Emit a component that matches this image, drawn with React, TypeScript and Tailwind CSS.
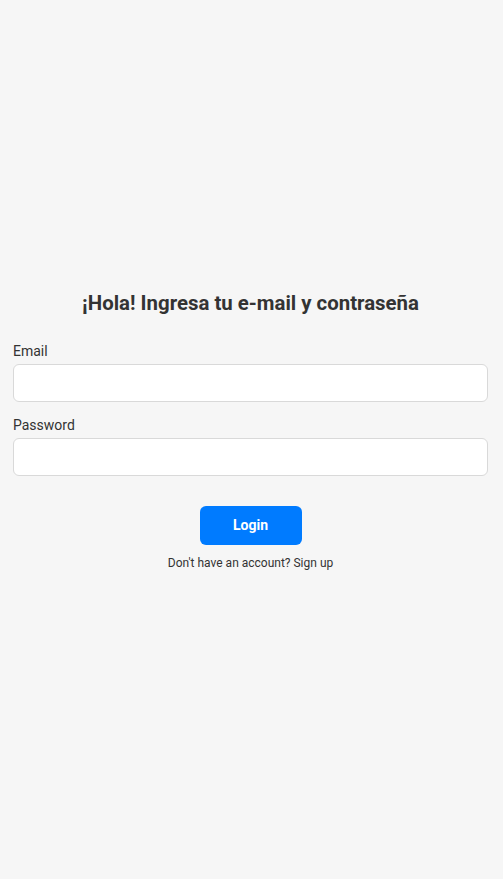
export default function App() {
  return (
    <div className="min-h-screen w-full bg-[#f6f6f6] flex flex-col justify-center pl-[13px] pr-[15px] pb-[20px] font-['Roboto',sans-serif] text-[#333]">
      <h1 className="text-center text-[20.4px] font-bold leading-[28px] mb-[24px]">
        ¡Hola! Ingresa tu e-mail y contraseña
      </h1>
      <label className="block text-[14px] leading-[20px] text-[#333] mb-[3px]">Email</label>
      <input
        type="email"
        className="block w-full h-[38px] rounded-[6px] border border-[#d9d9d9] bg-white px-3 outline-none mb-[13px]"
      />
      <label className="block text-[14px] leading-[20px] text-[#333] mb-[3px]">Password</label>
      <input
        type="password"
        className="block w-full h-[38px] rounded-[6px] border border-[#d9d9d9] bg-white px-3 outline-none"
      />
      <div className="flex flex-col items-center mt-[30px]">
        <button className="w-[102px] h-[39px] rounded-[6px] bg-[#007bff] text-white text-[14px] font-bold">
          Login
        </button>
        <p className="mt-[10px] text-[12px] leading-[16px] text-[#333]">
          Don't have an account? Sign up
        </p>
      </div>
    </div>
  );
}
